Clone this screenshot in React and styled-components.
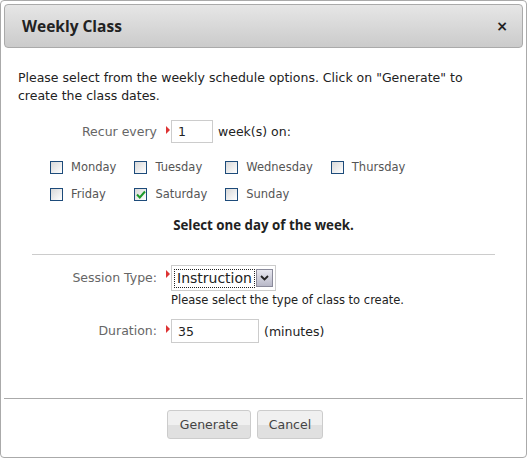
import React from 'react'
import styled, { createGlobalStyle } from 'styled-components'

const Global = createGlobalStyle`
  html, body { margin: 0; padding: 0; background: #fff; }
  body { font-family: "DejaVu Sans", Verdana, sans-serif; font-size: 12.5px; color: #222; }
  * { box-sizing: border-box; }
`

const Dialog = styled.div`
  width: 527px;
  height: 458px;
  border: 1px solid #aaa;
  border-radius: 4px;
  padding: 3px;
  display: flex;
  flex-direction: column;
`

const Header = styled.div`
  height: 44px;
  border: 1px solid #aaa;
  border-radius: 4px;
  background: linear-gradient(#e6e6e6, #cbcbcb);
  display: flex;
  align-items: center;
  justify-content: space-between;
  padding: 0 14px 0 17px;
`

const Title = styled.span`
  font-family: "Open Sans", sans-serif;
  font-weight: 700;
  font-size: 15.5px;
  color: #222;
`

const Close = styled.span`
  font-family: "DejaVu Sans", sans-serif;
  font-weight: 700;
  font-size: 14px;
  color: #222;
  cursor: pointer;
`

const Body = styled.div`
  flex: 1;
  padding: 21px 14px 0 14px;
`

const Intro = styled.p`
  margin: 0;
  max-width: 470px;
  line-height: 18px;
`

const FormRow = styled.div`
  display: grid;
  grid-template-columns: 139px 14px 1fr;
  align-items: start;
  margin-top: ${p => p.$top || 0}px;
`

const Label = styled.label`
  color: #666;
  text-align: right;
  line-height: ${p => p.$h || 23}px;
`

const Marker = styled.span`
  display: block;
  width: 0;
  height: 0;
  margin: ${p => p.$off || 6}px 0 0 9px;
  border-left: 4px solid #d33;
  border-top: 4px solid transparent;
  border-bottom: 4px solid transparent;
`

const Field = styled.div`
  display: flex;
  align-items: center;
  column-gap: 5px;
  row-gap: 0;
  flex-wrap: wrap;
`

const TextInput = styled.input`
  width: ${p => p.$w}px;
  height: ${p => p.$h || 23}px;
  border: 1px solid #ccc;
  padding: 0 6px;
  font-family: "DejaVu Sans", sans-serif;
  font-size: 12.5px;
  color: #222;
  outline: none;
`

const Days = styled.div`
  display: grid;
  grid-template-columns: repeat(4, auto);
  justify-content: start;
  column-gap: 18px;
  row-gap: 11px;
  margin: 16px 0 0 32px;
`

const Day = styled.label`
  display: flex;
  align-items: center;
  gap: 8px;
  color: #555;
  font-size: 11.5px;
  line-height: 16px;
`

const Box = styled.span`
  width: 13px;
  height: 13px;
  border: 1px solid #1d4b7a;
  background: linear-gradient(135deg, #d8d8d8, #ffffff);
  display: flex;
  align-items: center;
  justify-content: center;
`

const Hint = styled.div`
  text-align: center;
  font-family: "Open Sans", sans-serif;
  font-weight: 700;
  font-size: 13.3px;
  color: #222;
  margin-top: 14px;
`

const Rule = styled.hr`
  border: 0;
  border-top: 1px solid #ccc;
  margin: 20px 0 0 14px;
  width: 463px;
`

const Select = styled.div`
  display: flex;
  align-items: center;
  height: 26px;
  border: 1px solid #ccc;
  padding: 0 2px;
  gap: 1px;
`

const SelectValue = styled.span`
  border: 1px dotted #222;
  padding: 0 2px;
  line-height: 17px;
  font-size: 14px;
  color: #222;
`

const SelectButton = styled.span`
  width: 17px;
  height: 18px;
  border: 1px solid #8a8a9a;
  background: linear-gradient(#e8e8f0, #b8b8c8);
  display: flex;
  align-items: center;
  justify-content: center;
`

const Help = styled.div`
  width: 100%;
  font-size: 11.5px;
  line-height: 14px;
  color: #222;
  margin-top: 2px;
`

const Footer = styled.div`
  border-top: 1px solid #aaa;
  height: 56px;
  display: flex;
  align-items: flex-start;
  gap: 6px;
  padding: 11px 0 0 163px;
`

const Button = styled.button`
  width: ${p => p.$w}px;
  height: 29px;
  border: 1px solid #ccc;
  border-radius: 3px;
  background: linear-gradient(#f0f0f0 50%, #e0e0e0 50%);
  font-family: "DejaVu Sans", sans-serif;
  font-size: 12.5px;
  color: #444;
  cursor: pointer;
`

const days = [
  ['Monday', false], ['Tuesday', false], ['Wednesday', false], ['Thursday', false],
  ['Friday', false], ['Saturday', true], ['Sunday', false],
]

function Check() {
  return (
    <svg width="10" height="9" viewBox="0 0 10 9">
      <path d="M1 4.5 L3.8 7.5 L9 1.5" fill="none" stroke="#1e9a2a" strokeWidth="2" />
    </svg>
  )
}

export default function App() {
  return (
    <>
      <Global />
      <Dialog>
        <Header>
          <Title>Weekly Class</Title>
          <Close>×</Close>
        </Header>
        <Body>
          <Intro>
            Please select from the weekly schedule options. Click on "Generate" to create the class dates.
          </Intro>
          <FormRow $top={15}>
            <Label>Recur every</Label>
            <Marker />
            <Field>
              <TextInput $w={42} defaultValue="1" />
              <span>week(s) on:</span>
            </Field>
          </FormRow>
          <Days>
            {days.map(([name, on]) => (
              <Day key={name}>
                <Box>{on && <Check />}</Box>
                {name}
              </Day>
            ))}
          </Days>
          <Hint>Select one day of the week.</Hint>
          <Rule />
          <FormRow $top={10}>
            <Label $h={26}>Session Type:</Label>
            <Marker $off={5} />
            <Field>
              <Select>
                <SelectValue>Instruction</SelectValue>
                <SelectButton>
                  <svg width="9" height="6" viewBox="0 0 9 6">
                    <path d="M1 1 L4.5 4.5 L8 1" fill="none" stroke="#222" strokeWidth="1.8" />
                  </svg>
                </SelectButton>
              </Select>
              <Help>Please select the type of class to create.</Help>
            </Field>
          </FormRow>
          <FormRow $top={12}>
            <Label $h={24}>Duration:</Label>
            <Marker $off={6} />
            <Field>
              <TextInput $w={88} $h={24} defaultValue="35" />
              <span>(minutes)</span>
            </Field>
          </FormRow>
        </Body>
        <Footer>
          <Button $w={84}>Generate</Button>
          <Button $w={66}>Cancel</Button>
        </Footer>
      </Dialog>
    </>
  )
}
